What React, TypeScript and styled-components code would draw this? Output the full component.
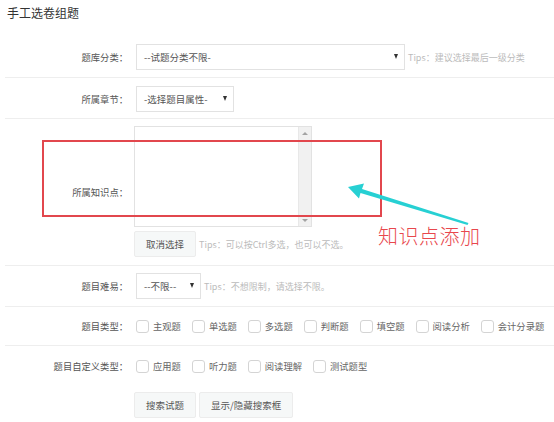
import React from "react";
import styled, { createGlobalStyle } from "styled-components";

const GlobalStyle = createGlobalStyle`
  html, body {
    margin: 0;
    padding: 0;
    background: #fff;
  }
  body {
    font-family: "Noto Sans CJK SC", "Noto Sans", "Liberation Sans", sans-serif;
    color: #555;
  }
`;

const Page = styled.div`
  position: relative;
  width: 554px;
  height: 422px;
  overflow: hidden;
`;

const Title = styled.h3`
  margin: 0;
  height: 36px;
  padding: 5px 0 0 7px;
  box-sizing: border-box;
  font-size: 12px;
  font-weight: normal;
  line-height: 16px;
  color: #333;
`;

const Form = styled.div`
  margin-left: 5px;
`;

interface RowProps {
  pt: number;
  pb: number;
  last?: boolean;
}

const Row = styled.div<RowProps>`
  display: flex;
  align-items: center;
  padding: ${({ pt }) => pt}px 0 ${({ pb }) => pb}px;
  border-bottom: ${({ last }) => (last ? "none" : "1px solid #eee")};
`;

const Label = styled.div`
  width: 123px;
  flex: none;
  text-align: right;
  font-size: 9.3px;
  color: #555;
  white-space: nowrap;
`;

const Field = styled.div`
  margin-left: 6px;
  display: flex;
  align-items: center;
`;

const Column = styled.div`
  margin-left: 6px;
  display: flex;
  flex-direction: column;
  gap: 4px;
`;

const Select = styled.div<{ w: number }>`
  width: ${({ w }) => w}px;
  height: 26px;
  margin-left: 2px;
  box-sizing: border-box;
  border: 1px solid #e2e2e2;
  background: #fff;
  display: flex;
  align-items: center;
  justify-content: space-between;
  padding: 0 6px 0 7px;
  font-size: 9.5px;
  color: #555;
  white-space: nowrap;
`;

const Caret = styled.span`
  width: 0;
  height: 0;
  border-left: 2.5px solid transparent;
  border-right: 2.5px solid transparent;
  border-top: 5px solid #333;
  margin-top: -2px;
`;

const Tip = styled.span`
  margin-left: 3px;
  font-size: 9px;
  color: #bbb;
  white-space: nowrap;
`;

const ListBox = styled.div`
  width: 178px;
  height: 101px;
  box-sizing: border-box;
  border: 1px solid #e2e2e2;
  display: flex;
  justify-content: flex-end;
`;

const ScrollBar = styled.div`
  width: 12px;
  background: #f1f1f1;
  border-left: 1px solid #e8e8e8;
  display: flex;
  flex-direction: column;
  justify-content: space-between;
  align-items: center;
  padding: 5px 0 4px;
`;

const Arrow = styled.span<{ up?: boolean }>`
  width: 0;
  height: 0;
  border-left: 3px solid transparent;
  border-right: 3px solid transparent;
  ${({ up }) =>
    up ? "border-bottom: 3px solid #a3a3a3;" : "border-top: 3px solid #a3a3a3;"}
`;

const Button = styled.button`
  height: 26px;
  box-sizing: border-box;
  padding: 0 11px;
  border: 1px solid #ececec;
  border-radius: 2px;
  background: #f6f8f8;
  font-family: inherit;
  font-size: 9.5px;
  color: #555;
  white-space: nowrap;
`;

const ButtonRow = styled.div`
  display: flex;
  gap: 3px;
  padding: 7px 0 0 129px;
`;

const Check = styled.label`
  display: flex;
  align-items: center;
  gap: 4px;
  margin-right: 11px;
  font-size: 9.3px;
  color: #666;
  white-space: nowrap;
`;

const Box = styled.span`
  width: 11px;
  height: 11px;
  border: 1px solid #d4d4d4;
  border-radius: 3px;
  background: #fff;
`;

const Checks = styled.div`
  margin-left: 8px;
  display: flex;
  align-items: center;
`;

const Highlight = styled.div`
  position: absolute;
  left: 42px;
  top: 140px;
  width: 340px;
  height: 77px;
  box-sizing: border-box;
  border: 2px solid #e2474d;
  pointer-events: none;
`;

const Pointer = styled.svg`
  position: absolute;
  left: 340px;
  top: 178px;
`;

const Note = styled.div`
  position: absolute;
  left: 378px;
  top: 224px;
  font-size: 20px;
  font-weight: 300;
  line-height: 24px;
  color: #e8474d;
  letter-spacing: 0.5px;
`;

const questionTypes = ["主观题", "单选题", "多选题", "判断题", "填空题", "阅读分析", "会计分录题"];
const customTypes = ["应用题", "听力题", "阅读理解", "测试题型"];

export default function App() {
  return (
    <Page>
      <GlobalStyle />
      <Title>手工选卷组题</Title>
      <Form>
        <Row pt={8} pb={7}>
          <Label>题库分类：</Label>
          <Field>
            <Select w={269}>
              --试题分类不限-
              <Caret />
            </Select>
            <Tip>Tips：建议选择最后一级分类</Tip>
          </Field>
        </Row>
        <Row pt={8} pb={6}>
          <Label>所属章节：</Label>
          <Field>
            <Select w={98}>
              -选择题目属性-
              <Caret />
            </Select>
          </Field>
        </Row>
        <Row pt={7} pb={8}>
          <Label>所属知识点：</Label>
          <Column>
            <ListBox>
              <ScrollBar>
                <Arrow up />
                <Arrow />
              </ScrollBar>
            </ListBox>
            <Field style={{ marginLeft: 0 }}>
              <Button>取消选择</Button>
              <Tip>Tips：可以按Ctrl多选，也可以不选。</Tip>
            </Field>
          </Column>
        </Row>
        <Row pt={7} pb={7}>
          <Label>题目难易：</Label>
          <Field>
            <Select w={65}>
              --不限--
              <Caret />
            </Select>
            <Tip>Tips：不想限制，请选择不限。</Tip>
          </Field>
        </Row>
        <Row pt={12} pb={12}>
          <Label>题目类型：</Label>
          <Checks>
            {questionTypes.map((t) => (
              <Check key={t}>
                <Box />
                {t}
              </Check>
            ))}
          </Checks>
        </Row>
        <Row pt={13} pb={12} last>
          <Label>题目自定义类型：</Label>
          <Checks>
            {customTypes.map((t) => (
              <Check key={t}>
                <Box />
                {t}
              </Check>
            ))}
          </Checks>
        </Row>
        <ButtonRow>
          <Button>搜索试题</Button>
          <Button>显示/隐藏搜索框</Button>
        </ButtonRow>
      </Form>

      <Highlight />
      <Pointer width="135" height="52" viewBox="340 178 135 52">
        <polygon
          points="348,187 364,183.5 362,189 468.5,223 467.5,225 360.5,193 359,198.5"
          fill="#27d0d3"
        />
      </Pointer>
      <Note>知识点添加</Note>
    </Page>
  );
}
